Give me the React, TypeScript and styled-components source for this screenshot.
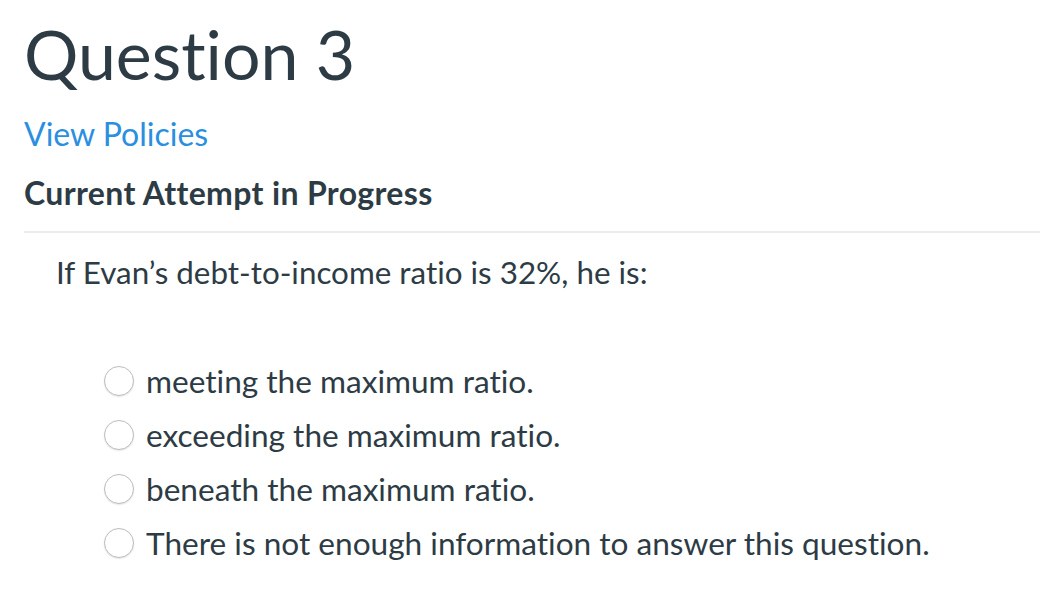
import React from 'react';
import styled, { createGlobalStyle } from 'styled-components';

const GlobalStyle = createGlobalStyle`
  html, body {
    margin: 0;
    padding: 0;
    background: #ffffff;
  }
  body {
    font-family: Lato, "Helvetica Neue", Arial, sans-serif;
    color: #2d3b45;
    font-variant-ligatures: none;
  }
`;

const Page = styled.div`
  padding: 0 0 0 24px;
  width: 1040px;
  box-sizing: border-box;
`;

const Title = styled.h1`
  margin: 0;
  padding-top: 11px;
  font-size: 68px;
  font-weight: 400;
  line-height: 86px;
`;

const PolicyLink = styled.a`
  display: block;
  margin-top: 17px;
  font-size: 32px;
  line-height: 40px;
  color: #2b8fe0;
  text-decoration: none;
`;

const Status = styled.h2`
  margin: 19px 0 0;
  font-size: 32px;
  font-weight: 700;
  line-height: 40px;
  letter-spacing: 0.35px;
`;

const Divider = styled.hr`
  margin: 18px 0 0;
  border: none;
  height: 2px;
  background: #ececec;
`;

const QuestionBody = styled.div`
  padding: 19px 0 0 32px;
`;

const Prompt = styled.p`
  margin: 0;
  font-size: 31.4px;
  line-height: 40px;
`;

const Answers = styled.div`
  display: flex;
  flex-direction: column;
  gap: 14px;
  margin-top: 69px;
  padding-left: 48px;
`;

const Answer = styled.label`
  display: flex;
  align-items: center;
  gap: 12px;
  font-size: 31.6px;
  line-height: 40px;
`;

const Radio = styled.span`
  display: inline-block;
  width: 30px;
  height: 30px;
  box-sizing: border-box;
  border-radius: 50%;
  border: 1.5px solid #bdbdbd;
  background: #ffffff;
  box-shadow: 0 1px 1.5px rgba(0, 0, 0, 0.1);
  flex-shrink: 0;
`;

const options = [
  'meeting the maximum ratio.',
  'exceeding the maximum ratio.',
  'beneath the maximum ratio.',
  'There is not enough information to answer this question.',
];

export default function App() {
  return (
    <>
      <GlobalStyle />
      <Page>
        <Title>Question 3</Title>
        <PolicyLink href="#">View Policies</PolicyLink>
        <Status>Current Attempt in Progress</Status>
        <Divider />
        <QuestionBody>
          <Prompt>If Evan’s debt-to-income ratio is 32%, he is:</Prompt>
          <Answers>
            {options.map((o) => (
              <Answer key={o}>
                <Radio />
                {o}
              </Answer>
            ))}
          </Answers>
        </QuestionBody>
      </Page>
    </>
  );
}
